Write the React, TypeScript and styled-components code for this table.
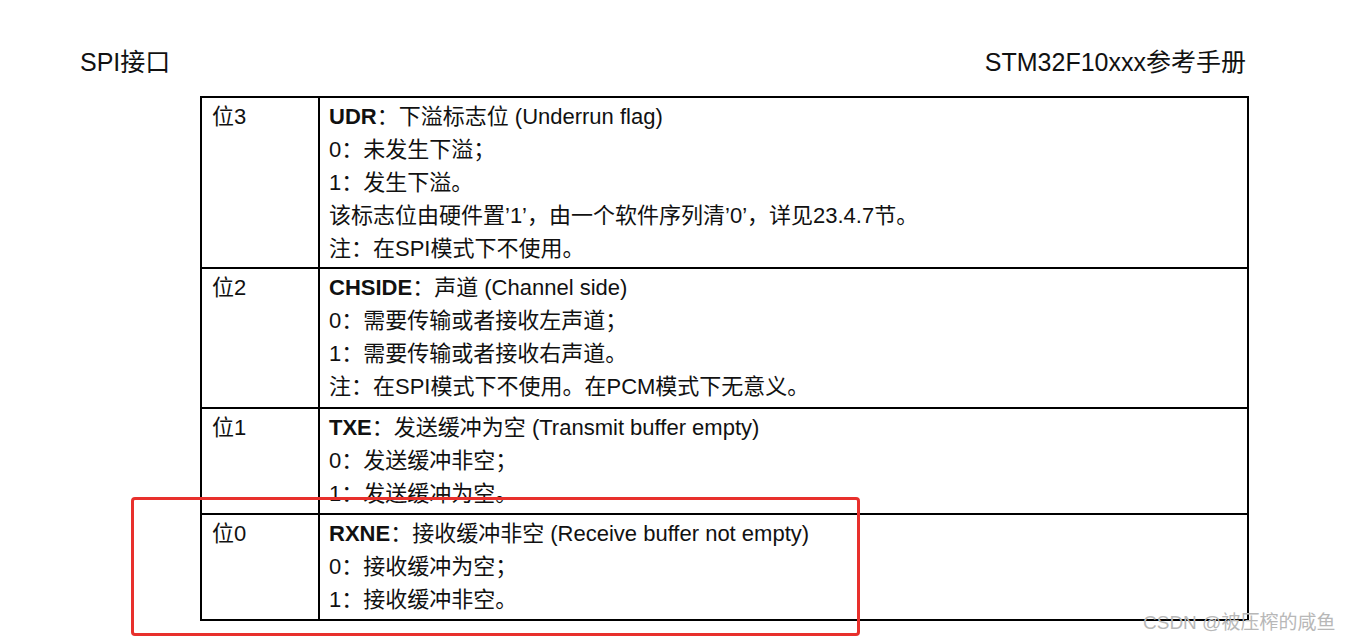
import React from 'react'
import styled, { createGlobalStyle } from 'styled-components'

const GlobalStyle = createGlobalStyle`
  html, body {
    margin: 0;
    padding: 0;
    background: #fff;
  }
  body {
    font-family: "Liberation Sans", "Noto Sans CJK SC", sans-serif;
    color: #111;
  }
`

const Page = styled.div`
  position: relative;
  width: 1350px;
  height: 640px;
  overflow: hidden;
  background: #fff;
`

const Header = styled.div`
  display: flex;
  justify-content: space-between;
  align-items: center;
  padding: 47px 104px 0 80px;
  height: 30px;
  font-size: 25px;
  line-height: 30px;
`

const Table = styled.table`
  margin: 19px 0 0 200px;
  width: 1049px;
  border-collapse: collapse;
  font-size: 22px;
  line-height: 33px;

  td {
    border: 2px solid #000;
    vertical-align: top;
    padding: 2px 9px;
  }
`

const BitCell = styled.td`
  width: 97px;
  padding-left: 10px !important;
`

const Row = styled.tr<{ $h: number }>`
  height: ${(p) => p.$h}px;
`

const Line = styled.div`
  white-space: nowrap;
`

const Name = styled.b`
  font-weight: bold;
`

const Highlight = styled.div`
  position: absolute;
  left: 131px;
  top: 497px;
  width: 723px;
  height: 133px;
  border: 3px solid #e8302c;
  border-radius: 4px;
`

const Watermark = styled.div`
  position: absolute;
  left: 1143px;
  top: 607px;
  font-size: 19px;
  color: #b8b8b8;
  white-space: nowrap;
`

type Field = {
  bit: string
  name: string
  title: string
  lines: string[]
  height: number
}

const fields: Field[] = [
  {
    bit: '位3',
    name: 'UDR',
    title: '下溢标志位 (Underrun flag)',
    lines: ['0：未发生下溢；', '1：发生下溢。', '该标志位由硬件置’1’，由一个软件序列清’0’，详见23.4.7节。', '注：在SPI模式下不使用。'],
    height: 170,
  },
  {
    bit: '位2',
    name: 'CHSIDE',
    title: '声道 (Channel side)',
    lines: ['0：需要传输或者接收左声道；', '1：需要传输或者接收右声道。', '注：在SPI模式下不使用。在PCM模式下无意义。'],
    height: 140,
  },
  {
    bit: '位1',
    name: 'TXE',
    title: '发送缓冲为空 (Transmit buffer empty)',
    lines: ['0：发送缓冲非空；', '1：发送缓冲为空。'],
    height: 106,
  },
  {
    bit: '位0',
    name: 'RXNE',
    title: '接收缓冲非空 (Receive buffer not empty)',
    lines: ['0：接收缓冲为空；', '1：接收缓冲非空。'],
    height: 106,
  },
]

function App() {
  return (
    <Page>
      <GlobalStyle />
      <Header>
        <span>SPI接口</span>
        <span>STM32F10xxx参考手册</span>
      </Header>
      <Table>
        <tbody>
          {fields.map((f) => (
            <Row key={f.bit} $h={f.height}>
              <BitCell>{f.bit}</BitCell>
              <td>
                <Line>
                  <Name>{f.name}</Name>：{f.title}
                </Line>
                {f.lines.map((l) => (
                  <Line key={l}>{l}</Line>
                ))}
              </td>
            </Row>
          ))}
        </tbody>
      </Table>
      <Highlight />
      <Watermark>CSDN @被压榨的咸鱼</Watermark>
    </Page>
  )
}

export default App
